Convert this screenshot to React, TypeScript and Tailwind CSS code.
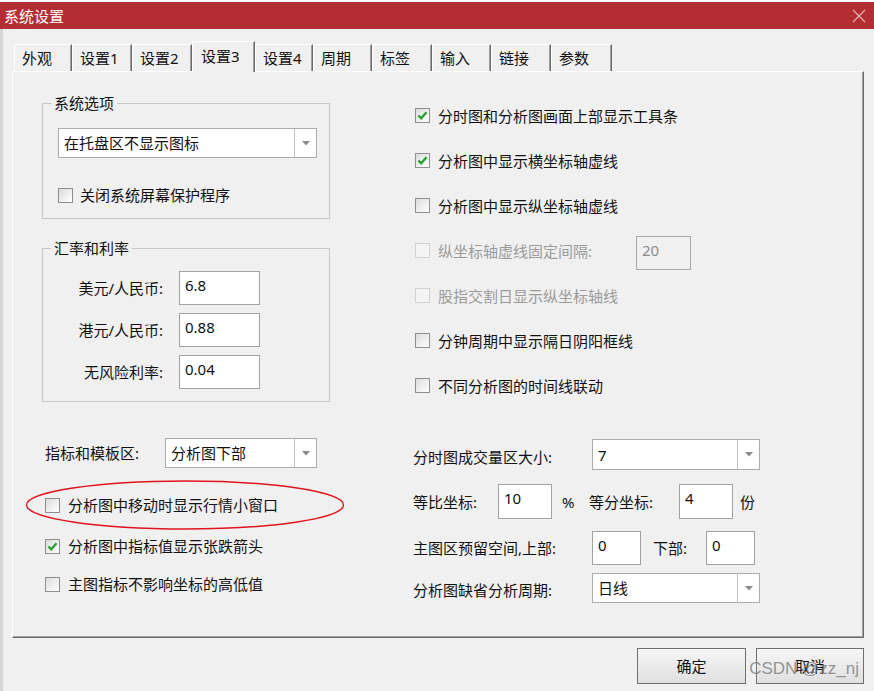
import React from 'react';

const TABS: { name: string; w: string; active?: boolean }[] = [
  { name: '外观', w: 'w-[58px]' },
  { name: '设置1', w: 'w-[60px]' },
  { name: '设置2', w: 'w-[60px]' },
  { name: '设置3', w: 'w-[63px]', active: true },
  { name: '设置4', w: 'w-[58px]' },
  { name: '周期', w: 'w-[59px]' },
  { name: '标签', w: 'w-[60px]' },
  { name: '输入', w: 'w-[59px]' },
  { name: '链接', w: 'w-[60px]' },
  { name: '参数', w: 'w-[61px]' },
];

// 复选框
function CheckBox({ checked, disabled }: { checked?: boolean; disabled?: boolean }) {
  return (
    <span
      className={
        disabled
          ? 'w-[15px] h-[15px] shrink-0 border border-[#d2d2d2] bg-[#f4f4f4]'
          : 'w-[15px] h-[15px] shrink-0 border border-[#8e8f8f] bg-gradient-to-br from-[#dcdcdc] to-[#ffffff] flex items-center justify-center'
      }
    >
      {checked && (
        <svg width="11" height="11" viewBox="0 0 11 11">
          <path d="M1.5 5.5 L4.2 8.3 L9.5 2.2" fill="none" stroke="#22a12a" strokeWidth="2.2" />
        </svg>
      )}
    </span>
  );
}

function CheckRow({ label, checked, disabled, gap = 'gap-[8px]' }: { label: string; checked?: boolean; disabled?: boolean; gap?: string }) {
  return (
    <div className={`flex items-center h-[20px] ${gap}`}>
      <CheckBox checked={checked} disabled={disabled} />
      <span className={disabled ? 'text-[#9b9b9b]' : 'text-[#111]'}>{label}</span>
    </div>
  );
}

// 下拉框
function Combo({ value, size }: { value: string; size: string }) {
  return (
    <div className={`${size} flex bg-white border border-[#acacac]`}>
      <div className="flex-1 flex items-center pl-[5px] text-[#111]">{value}</div>
      <div className="w-[22px] border-l border-[#c4c4c4] flex items-center justify-center">
        <svg width="8" height="5" viewBox="0 0 8 5">
          <path d="M0 0 L8 0 L4 4.5 Z" fill="#8a8a8a" />
        </svg>
      </div>
    </div>
  );
}

function Input({ value, size, disabled }: { value: string; size: string; disabled?: boolean }) {
  return (
    <div
      className={
        disabled
          ? `${size} border border-[#a8a8a8] bg-[#f0f0f0] text-[#8d8d8d] pl-[5px] pt-[3px] leading-[20px]`
          : `${size} border border-[#a2a2a2] bg-white text-[#111] pl-[5px] pt-[3px] leading-[20px]`
      }
    >
      {value}
    </div>
  );
}

export default function App() {
  return (
    <div className="w-[874px] h-[691px] bg-[#f0f0f0] flex flex-col font-['Noto_Sans','Noto_Sans_CJK_SC',sans-serif] text-[15px] leading-[20px] overflow-hidden">
      <div className="h-[2px] bg-white" />
      {/* 标题栏 */}
      <div className="h-[27px] bg-[#b22e33] flex items-center justify-between pl-[4px] pr-[8px]">
        <span className="text-white text-[15px]">系统设置</span>
        <svg width="14" height="14" viewBox="0 0 14 14">
          <path d="M1 1 L13 13 M13 1 L1 13" stroke="#e8b3b5" strokeWidth="1.2" />
        </svg>
      </div>

      <div className="flex-1 flex flex-col border-l-[3px] border-[#d6d6d6] relative">
        {/* 标签页 */}
        <div className="mt-[12px] ml-[11px] h-[30px] flex items-end">
          {TABS.map((t) =>
            t.active ? (
              <div
                key={t.name}
                className={`${t.w} h-[31px] -mb-[1px] relative z-10 bg-[#f0f0f0] border-l border-t border-white border-r border-r-[#696969] shadow-[inset_-1px_0_0_#a0a0a0] pl-[8px] pt-[4px] text-[#111]`}
              >
                {t.name}
              </div>
            ) : (
              <div
                key={t.name}
                className={`${t.w} h-[27px] bg-[#f0f0f0] border-l border-t border-white border-r border-r-[#696969] shadow-[inset_-1px_0_0_#a0a0a0] pl-[7px] pt-[3px] text-[#111]`}
              >
                {t.name}
              </div>
            )
          )}
        </div>

        {/* 面板 */}
        <div className="ml-[9px] w-[852px] h-[567px] border-l border-t border-white border-r border-b border-r-[#696969] border-b-[#696969] shadow-[inset_-1px_-1px_0_#a0a0a0] flex">
          {/* 左列 */}
          <div className="ml-[29px] w-[300px] flex flex-col">
            <fieldset className="mt-[21px] w-[288px] border border-[#c6c6c6] pb-[13px]">
              <legend className="ml-[8px] px-[3px] text-[#111]">系统选项</legend>
              <div className="mt-[15px] ml-[15px]">
                <Combo value="在托盘区不显示图标" size="w-[259px] h-[30px]" />
              </div>
              <div className="mt-[27px] ml-[15px]">
                <CheckRow label="关闭系统屏幕保护程序" gap="gap-[7px]" />
              </div>
            </fieldset>

            <fieldset className="mt-[19px] w-[288px] border border-[#c6c6c6] pb-[12px]">
              <legend className="ml-[8px] px-[3px] text-[#111]">汇率和利率</legend>
              <div className="mt-[13px] flex flex-col gap-[8px]">
                {[
                  ['美元/人民币:', '6.8'],
                  ['港元/人民币:', '0.88'],
                  ['无风险利率:', '0.04'],
                ].map(([label, v]) => (
                  <div key={label} className="flex items-center">
                    <span className="w-[120px] text-right text-[#111]">{label}</span>
                    <div className="ml-[16px]">
                      <Input value={v} size="w-[81px] h-[34px]" />
                    </div>
                  </div>
                ))}
              </div>
            </fieldset>

            <div className="mt-[36px] ml-[3px] flex items-center">
              <span className="w-[120px] text-[#111]">指标和模板区:</span>
              <Combo value="分析图下部" size="w-[152px] h-[30px]" />
            </div>

            <div className="mt-[27px] ml-[3px] relative">
              <CheckRow label="分析图中移动时显示行情小窗口" />
              <svg className="absolute -left-[21px] -top-[16px]" width="322" height="52" viewBox="0 0 322 52">
                <ellipse cx="161" cy="26" rx="158.5" ry="24" fill="none" stroke="#e0141c" strokeWidth="1.4" />
              </svg>
            </div>
            <div className="mt-[21px] ml-[3px]">
              <CheckRow label="分析图中指标值显示张跌箭头" checked />
            </div>
            <div className="mt-[18px] ml-[3px]">
              <CheckRow label="主图指标不影响坐标的高低值" />
            </div>
          </div>

          {/* 右列 */}
          <div className="ml-[71px] flex flex-col">
            <div className="mt-[21px] ml-[2px] flex flex-col">
              <div className="h-[45px] flex items-center">
                <CheckRow label="分时图和分析图画面上部显示工具条" checked />
              </div>
              <div className="h-[45px] flex items-center">
                <CheckRow label="分析图中显示横坐标轴虚线" checked />
              </div>
              <div className="h-[45px] flex items-center">
                <CheckRow label="分析图中显示纵坐标轴虚线" />
              </div>
              <div className="h-[45px] flex items-center">
                <CheckBox disabled />
                <span className="ml-[8px] w-[198px] text-[#9b9b9b]">纵坐标轴虚线固定间隔:</span>
                <div className="mt-[5px]">
                  <Input value="20" size="w-[55px] h-[34px]" disabled />
                </div>
              </div>
              <div className="h-[45px] flex items-center">
                <CheckRow label="股指交割日显示纵坐标轴线" disabled />
              </div>
              <div className="h-[45px] flex items-center">
                <CheckRow label="分钟周期中显示隔日阴阳框线" />
              </div>
              <div className="h-[45px] flex items-center">
                <CheckRow label="不同分析图的时间线联动" />
              </div>
            </div>

            <div className="mt-[31px] flex items-center">
              <span className="w-[179px] mt-[4px] text-[#111]">分时图成交量区大小:</span>
              <Combo value="7" size="w-[168px] h-[31px]" />
            </div>
            <div className="mt-[14px] flex items-center text-[#111]">
              <span className="w-[85px]">等比坐标:</span>
              <Input value="10" size="w-[54px] h-[35px]" />
              <span className="ml-[10px] w-[16px]">%</span>
              <span className="ml-[11px] w-[90px]">等分坐标:</span>
              <Input value="4" size="w-[54px] h-[35px]" />
              <span className="ml-[7px]">份</span>
            </div>
            <div className="mt-[12px] flex items-center text-[#111]">
              <span className="w-[179px]">主图区预留空间,上部:</span>
              <Input value="0" size="w-[49px] h-[34px]" />
              <span className="ml-[12px] w-[53px]">下部:</span>
              <Input value="0" size="w-[49px] h-[34px]" />
            </div>
            <div className="mt-[8px] flex items-center">
              <span className="w-[179px] mt-[4px] text-[#111]">分析图缺省分析周期:</span>
              <Combo value="日线" size="w-[168px] h-[30px]" />
            </div>
          </div>
        </div>

        {/* 按钮 */}
        <div className="mt-[10px] w-[861px] flex justify-end gap-[10px]">
          <button className="w-[109px] h-[36px] border border-[#6f6f6f] bg-gradient-to-b from-[#f6f6f6] to-[#e0e0e0] text-[#111]">确定</button>
          <button className="w-[108px] h-[36px] border border-[#6f6f6f] bg-gradient-to-b from-[#f6f6f6] to-[#e0e0e0] text-[#111]">取消</button>
        </div>
        <span className="absolute right-[15px] bottom-[12px] font-['Liberation_Sans',sans-serif] text-[17px] leading-[20px] text-[#7a7a7a]/80">
          CSDN @zz_nj
        </span>
      </div>
    </div>
  );
}
